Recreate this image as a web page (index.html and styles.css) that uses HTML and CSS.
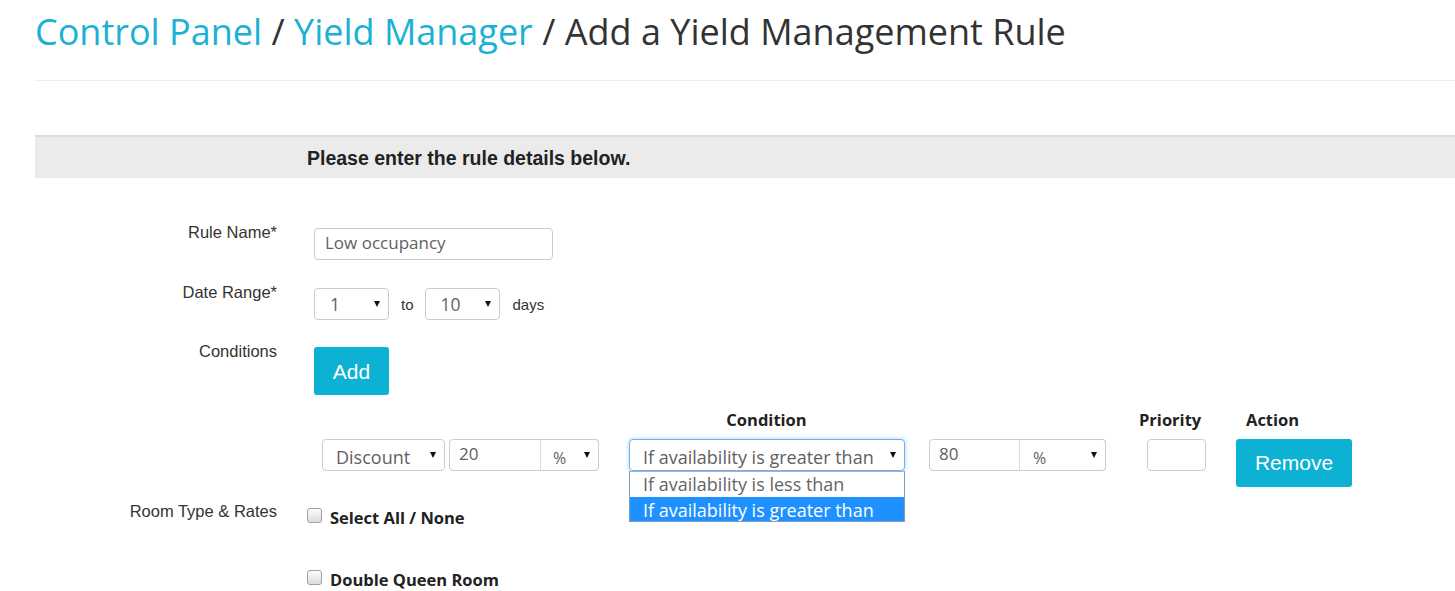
FILE: index.html
```html
<!DOCTYPE html>
<html>
<head>
<meta charset="utf-8">
<link rel="stylesheet" href="styles.css">
</head>
<body>
<div class="page">
  <h1 class="title"><a class="crumb">Control Panel</a> / <a class="crumb">Yield Manager</a> / Add a Yield Management Rule</h1>
  <div class="rule"></div>
  <div class="band"><span class="band-text">Please enter the rule details below.</span></div>

  <div class="form">
    <div class="row row-name">
      <div class="label">Rule Name*</div>
      <div class="ctrl"><div class="input name-input">Low occupancy</div></div>
    </div>
    <div class="row row-date">
      <div class="label">Date Range*</div>
      <div class="ctrl inline">
        <div class="select sel-small"><span class="val">1</span><span class="arrow"></span></div>
        <span class="small-text to">to</span>
        <div class="select sel-small"><span class="val">10</span><span class="arrow"></span></div>
        <span class="small-text days">days</span>
      </div>
    </div>
    <div class="row row-cond">
      <div class="label">Conditions</div>
      <div class="ctrl"><div class="btn btn-add">Add</div></div>
    </div>

    <div class="cond-table">
      <div class="cell"></div>
      <div class="cell"></div>
      <div class="cell head head-cond">Condition</div>
      <div class="cell"></div>
      <div class="cell head head-prio">Priority</div>
      <div class="cell head head-action">Action</div>

      <div class="cell"><div class="select sel-type"><span class="val">Discount</span><span class="arrow"></span></div></div>
      <div class="cell"><div class="group g1"><div class="input gi">20</div><div class="select gs"><span class="val">%</span><span class="arrow"></span></div></div></div>
      <div class="cell drop-wrap">
        <div class="select sel-cond focus"><span class="val">If availability is greater than</span><span class="arrow"></span></div>
        <div class="dropdown">
          <div class="opt">If availability is less than</div>
          <div class="opt sel">If availability is greater than</div>
        </div>
      </div>
      <div class="cell"><div class="group g2"><div class="input gi">80</div><div class="select gs"><span class="val">%</span><span class="arrow"></span></div></div></div>
      <div class="cell"><div class="input prio"></div></div>
      <div class="cell"><div class="btn btn-remove">Remove</div></div>
    </div>

    <div class="row row-room">
      <div class="label">Room Type &amp; Rates</div>
      <div class="ctrl checks">
        <div class="check-row"><span class="cbox"></span><span class="check-label">Select All / None</span></div>
        <div class="check-row"><span class="cbox"></span><span class="check-label">Double Queen Room</span></div>
      </div>
    </div>
  </div>
</div>
</body>
</html>
```

FILE: styles.css
```css
html, body { margin: 0; padding: 0; background: #fff; }
body { font-family: "Open Sans", sans-serif; color: #333; overflow: hidden; }
.page { padding-left: 35px; }

.title {
  margin: 0;
  padding-top: 9px;
  font-size: 36px;
  font-weight: 400;
  line-height: 46px;
  color: #333;
}
.crumb { color: #1ab1d2; text-decoration: none; }

.rule { margin-top: 25px; height: 1px; background: #eeeeee; }

.band {
  margin-top: 54px;
  border-top: 2px solid #dcdcdc;
  background: #ebebeb;
  height: 41px;
  display: flex;
  align-items: center;
  padding-left: 272px;
}
.band-text {
  font-family: "Liberation Sans", Arial, sans-serif;
  font-weight: 700;
  font-size: 19.5px;
  color: #222;
  padding-top: 1px;
}

.form { padding-top: 50px; }
.row { display: flex; align-items: flex-start; }
.label {
  width: 242px;
  text-align: right;
  font-family: "Liberation Sans", Arial, sans-serif;
  font-size: 16.5px;
  line-height: 20px;
  color: #333;
  margin-top: -6px;
  flex-shrink: 0;
}
.ctrl { margin-left: 37px; }
.inline { display: flex; align-items: center; }

.row-name { height: 60px; }
.row-date { height: 59px; }
.row-cond { height: 64px; }

.input {
  box-sizing: border-box;
  border: 1px solid #cccccc;
  border-radius: 4px;
  background: #fff;
  font-family: "Open Sans", sans-serif;
  font-size: 17px;
  color: #5f5f5f;
  height: 32px;
  line-height: 28px;
  padding: 0 10px;
}
.name-input { width: 239px; }

.select {
  position: relative;
  box-sizing: border-box;
  border: 1px solid #cccccc;
  border-radius: 4px;
  background: #fff;
  height: 32px;
  font-family: "Open Sans", sans-serif;
  font-size: 18px;
  color: #5f5f5f;
  padding-left: 15px;
  line-height: 35px;
  white-space: nowrap;
}
.arrow {
  position: absolute;
  right: 8px;
  top: 12px;
  width: 0; height: 0;
  border-left: 3.5px solid transparent;
  border-right: 3.5px solid transparent;
  border-top: 6px solid #111;
}
.sel-small { width: 75px; line-height: 30px; }
.sel-small .val { font-size: 17.5px; }
.small-text {
  font-family: "Liberation Sans", Arial, sans-serif;
  font-size: 15px;
  color: #333;
}
.to { margin: 0 11px 0 12px; }
.days { margin-left: 13px; }

.btn {
  box-sizing: border-box;
  background: #0db1d3;
  color: #fff;
  border-radius: 3px;
  font-family: "Liberation Sans", Arial, sans-serif;
  font-size: 21px;
  display: flex;
  align-items: center;
  justify-content: center;
  height: 48px;
}
.btn-add { width: 75px; padding-top: 1px; }
.btn-remove { width: 116px; }

.cond-table {
  margin-left: 287px;
  display: grid;
  grid-template-columns: 127px 180px 300px 218px 89px 115px;
  grid-template-rows: 28px 48px;
}
.head {
  font-weight: 700;
  font-size: 16.5px;
  line-height: 22px;
  color: #222;
  margin-top: -2px;
}
.head-cond { width: 275px; text-align: center; }
.head-prio { margin-left: -8px; }
.head-action { padding-left: 10px; }

.sel-type { width: 123px; padding-left: 13px; }
.group { display: flex; }
.group .gi { border-radius: 4px 0 0 4px; padding-left: 9px; }
.group .gs { border-radius: 0 4px 4px 0; border-left: 1px solid #ddd; margin-left: -1px; }
.g1 .gi { width: 92px; }
.g1 .gs { width: 59px; padding-left: 12px; }
.g2 .gi { width: 91px; }
.g2 .gs { width: 87px; padding-left: 13px; }
.gs .val { font-size: 16px; }
.prio { width: 59px; }

.drop-wrap { position: relative; }
.sel-cond { width: 276px; padding-left: 13px; }
.sel-cond.focus { border-color: #7aaee8; box-shadow: 0 0 4px rgba(102, 175, 233, 0.6); }
.dropdown {
  position: absolute;
  left: 0;
  top: 32px;
  width: 276px;
  box-sizing: border-box;
  border: 1px solid #7f9db9;
  border-top-color: #9fb4d0;
  background: #fff;
  z-index: 2;
}
.opt {
  height: 25px;
  line-height: 25px;
  font-size: 18px;
  color: #666;
  padding-left: 13px;
  white-space: nowrap;
}
.opt.sel { background: #1e90ff; color: #fff; height: 24px; line-height: 26px; }

.row-room { margin-top: 20px; }
.checks { margin-left: 30px; }
.check-row { display: flex; align-items: flex-start; height: 62px; }
.cbox {
  box-sizing: border-box;
  width: 15px; height: 15px;
  margin-top: 1px;
  border: 1px solid #a0a0a0;
  border-radius: 3px;
  background: linear-gradient(#fcfcfc, #dcdcdc);
  flex-shrink: 0;
}
.check-label {
  margin-left: 8px;
  font-weight: 700;
  font-size: 16.5px;
  line-height: 22px;
  color: #222;
  margin-top: 0;
}
```
